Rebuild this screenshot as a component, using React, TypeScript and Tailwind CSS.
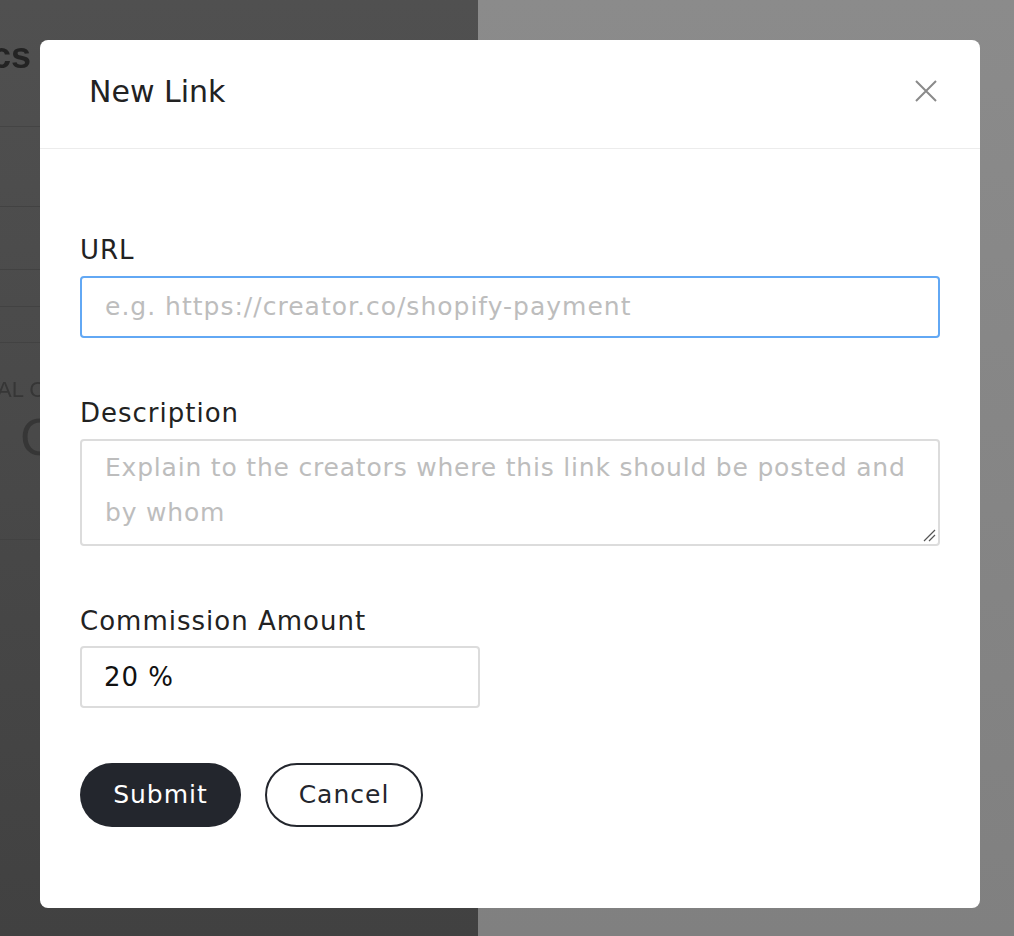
import React from "react";

const F = { fontFamily: "'DejaVu Sans', 'Noto Sans', sans-serif" };
const BG = { fontFamily: "'Liberation Sans', sans-serif" };

export default function App() {
  return (
    <div className="relative w-[1014px] h-[936px] overflow-hidden" style={F}>
      {/* background page under overlay */}
      <div className="flex h-full">
        <div className="w-[478px] h-full bg-gradient-to-b from-[#505050] to-[#414141] flex flex-col">
          <div className="h-[127px] border-b border-[#444] pt-[38px]">
            <div className="-ml-[9px] text-[36px] font-bold text-[#232323] leading-none blur-[0.5px]" style={BG}>cs</div>
          </div>
          <div className="h-[80px] border-b border-[#424242]" />
          <div className="h-[63px] border-b border-[#424242]" />
          <div className="h-[37px] border-b border-[#424242]" />
          <div className="h-[36px] border-b border-[#424242]" />
          <div className="h-[197px] border-b border-[#424242] flex flex-col">
            <div className="pt-[36px] -ml-[3px] text-[22px] text-[#363636] leading-none blur-[0.6px]" style={BG}>AL C</div>
            <div className="pt-[10px] pl-[20px] text-[52px] text-[#363636] leading-none blur-[0.6px]" style={BG}>C</div>
          </div>
        </div>
        <div className="flex-1 h-full bg-gradient-to-b from-[#8b8b8b] to-[#808080]" />
      </div>

      {/* modal */}
      <div className="absolute left-[40px] top-[40px] w-[940px] h-[868px] bg-white rounded-[8px] flex flex-col">
        <div className="h-[109px] shrink-0 border-b border-[#ececec] flex items-center justify-between pl-[49px] pr-[43px]">
          <div className="text-[30px] text-[#222] leading-none pb-[4px]">New Link</div>
          <svg width="22" height="22" viewBox="0 0 22 22" className="mb-[7px]">
            <path d="M1 1 L21 21 M21 1 L1 21" stroke="#8a8a8a" strokeWidth="2" />
          </svg>
        </div>
        <div className="px-[40px] pt-[86px] flex flex-col">
          <label className="text-[26px] tracking-[1px] text-[#222] leading-[30px] h-[30px]">URL</label>
          <div className="mt-[11px] h-[62px] border-2 border-[#62a8f4] rounded-[4px] flex items-center pl-[23px] text-[25px] tracking-[1px] text-[#bdbdbd]">
            e.g. https://creator.co/shopify-payment
          </div>

          <label className="mt-[60px] text-[26px] tracking-[1px] text-[#222] leading-[30px] h-[30px]">Description</label>
          <div className="relative mt-[11px] h-[107px] border-2 border-[#dcdcdc] rounded-[4px] pl-[23px] pt-[4px] pr-[20px] text-[25px] tracking-[0.8px] text-[#bdbdbd] leading-[45px]">
            Explain to the creators where this link should be posted and by whom
            <svg width="14" height="14" viewBox="0 0 14 14" className="absolute right-[2px] bottom-[2px]">
              <path d="M13 2 L2 13 M13 7 L7 13" stroke="#555" strokeWidth="1.2" />
            </svg>
          </div>

          <label className="mt-[60px] text-[26px] tracking-[1px] text-[#222] leading-[30px] h-[30px]">Commission Amount</label>
          <div className="mt-[10px] w-[400px] h-[62px] border-2 border-[#dcdcdc] rounded-[4px] flex items-center pl-[22px] text-[26px] tracking-[1px] text-[#111]">
            20 %
          </div>

          <div className="mt-[55px] flex gap-[24px]">
            <button className="w-[161px] h-[64px] rounded-full bg-[#23262d] text-white text-[25px] tracking-[1px] flex items-center justify-center">Submit</button>
            <button className="w-[158px] h-[64px] rounded-full border-2 border-[#23262d] bg-white text-[#23262d] text-[25px] tracking-[1px] flex items-center justify-center">Cancel</button>
          </div>
        </div>
      </div>
    </div>
  );
}
